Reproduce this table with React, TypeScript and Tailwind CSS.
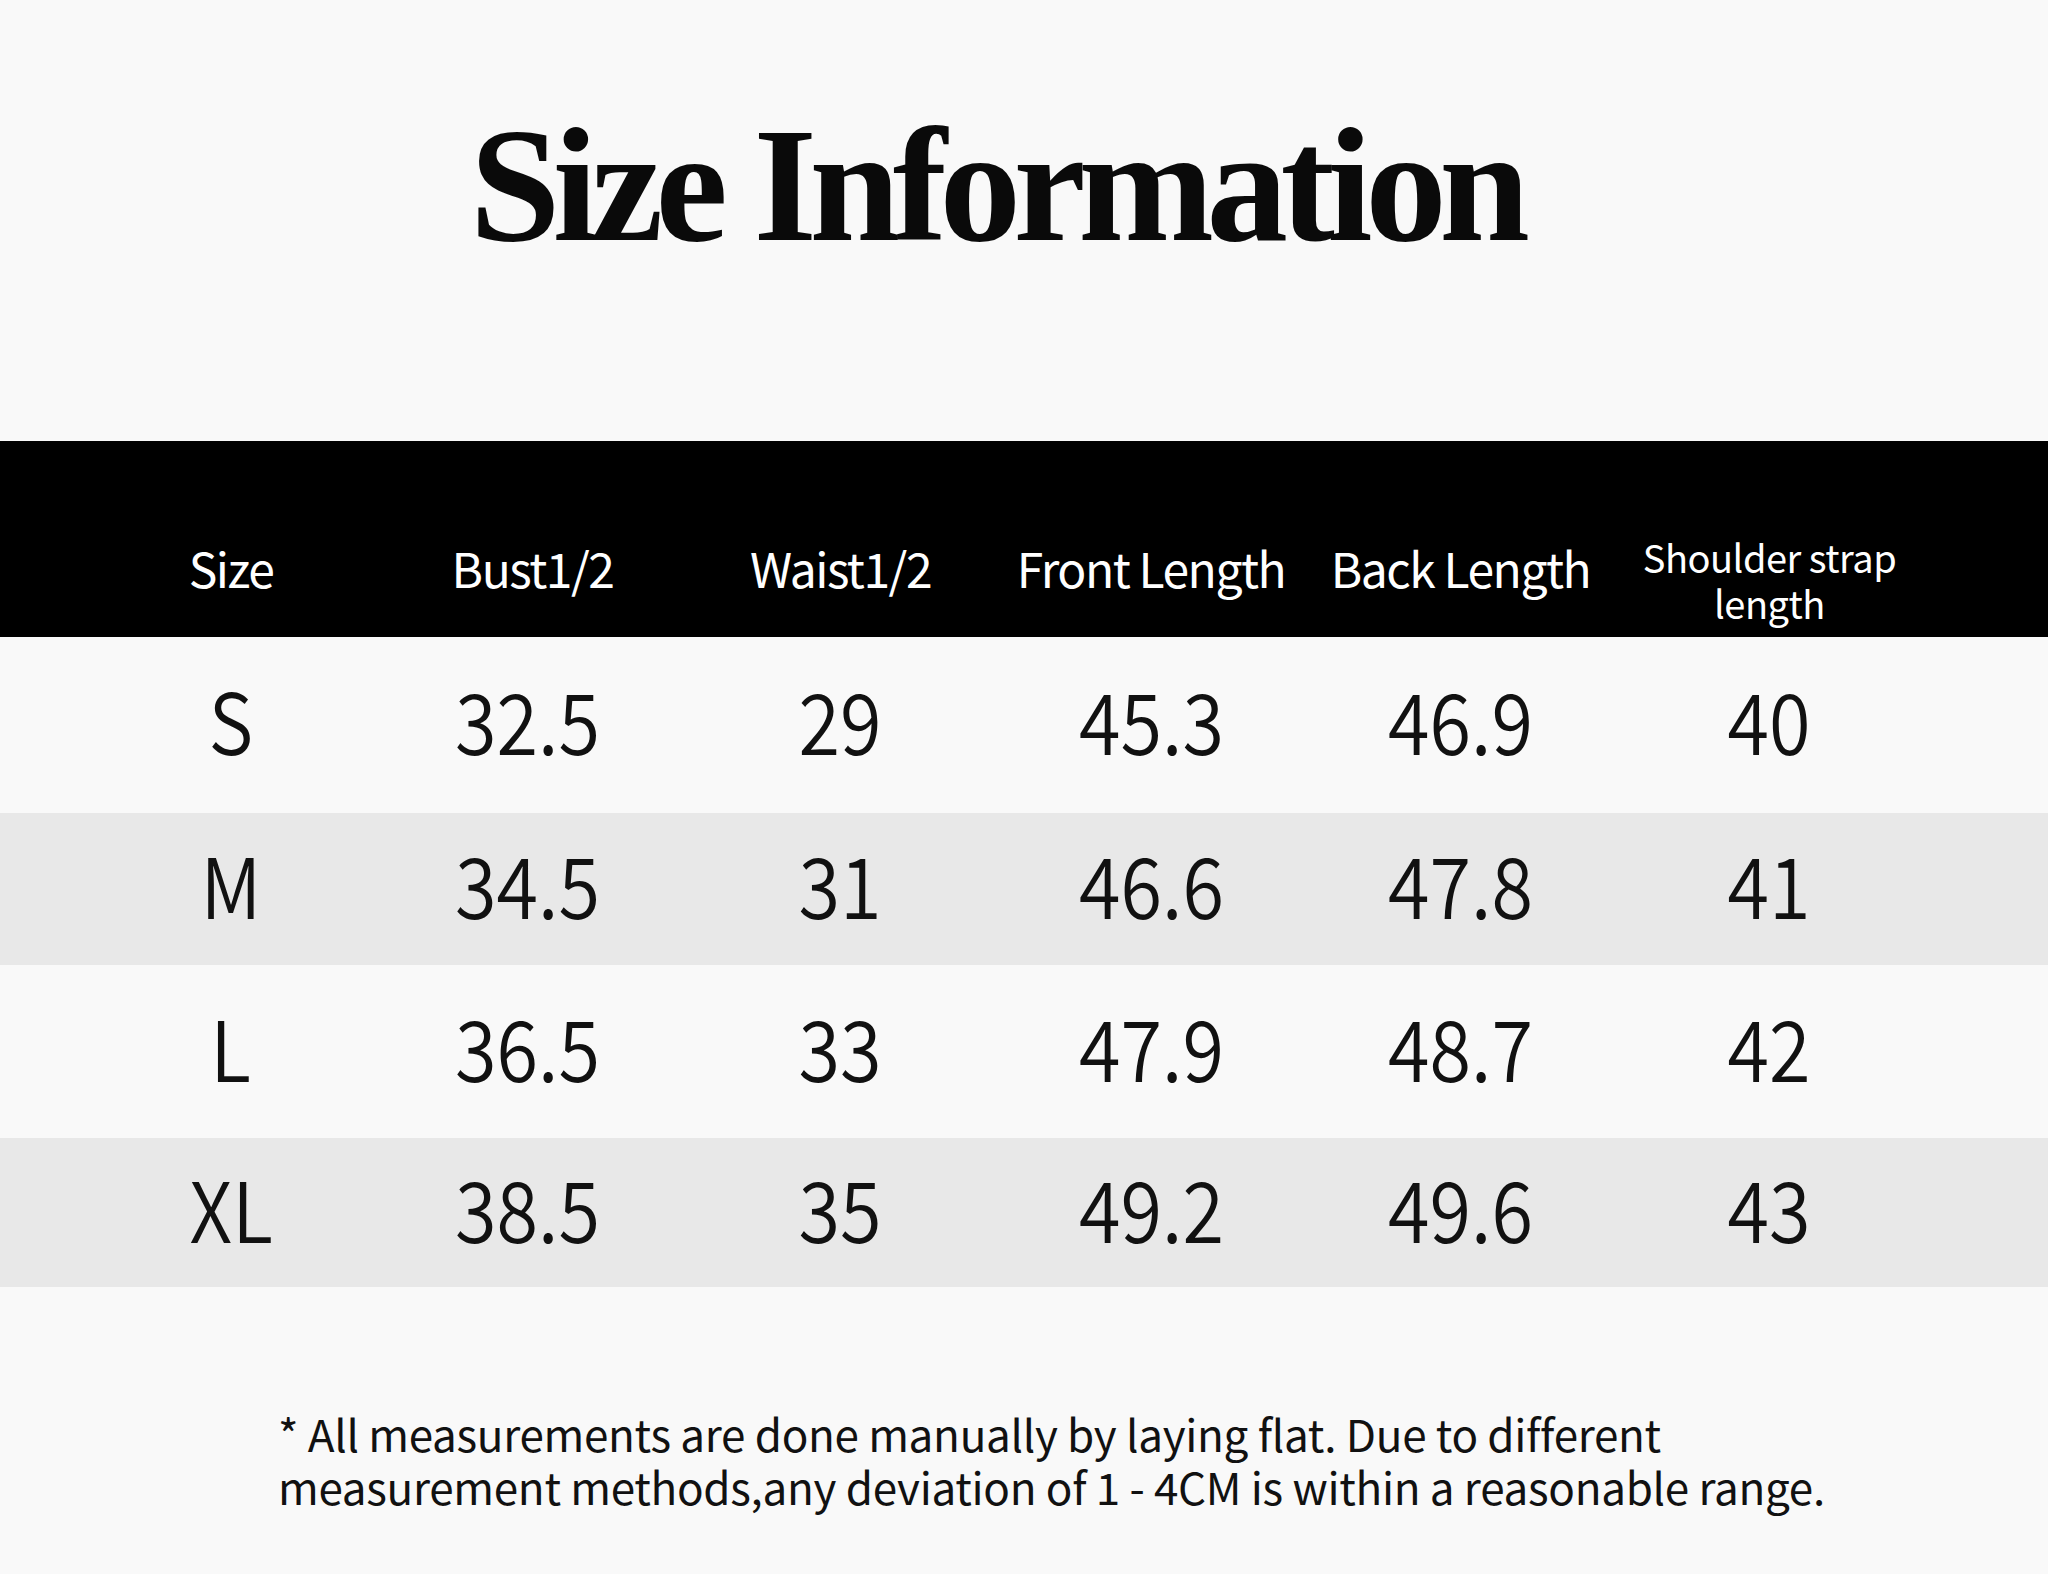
import React from "react";

const sans = { fontFamily: '"Noto Sans CJK SC", "Noto Sans", sans-serif' };

const headers = ["Size", "Bust1/2", "Waist1/2", "Front Length", "Back Length"];
const rows = [
  { cells: ["S", "32.5", "29", "45.3", "46.9", "40"], h: "h-[176px]", bg: "bg-[#f9f9f9]" },
  { cells: ["M", "34.5", "31", "46.6", "47.8", "41"], h: "h-[152px]", bg: "bg-[#e8e8e8]" },
  { cells: ["L", "36.5", "33", "47.9", "48.7", "42"], h: "h-[173px]", bg: "bg-[#f9f9f9]" },
  { cells: ["XL", "38.5", "35", "49.2", "49.6", "43"], h: "h-[149px]", bg: "bg-[#e8e8e8]" },
];

const cols = "grid grid-cols-[298px_305px_311px_310px_309px_309px] pl-[82px]";

export default function App() {
  return (
    <div className="w-[2048px] h-[1574px] bg-[#f9f9f9] flex flex-col overflow-hidden" style={sans}>
      <div className="h-[441px] pt-[104px] pr-[56px] flex justify-center">
        <h1
          className="text-[163px] leading-none font-bold text-[#0a0a0a] tracking-[-7.5px]"
          style={{ fontFamily: '"Liberation Serif", "Times New Roman", serif' }}
        >
          Size Information
        </h1>
      </div>
      <div className={`${cols} h-[196px] bg-black text-white pt-[56px] items-center`}>
        {headers.map((h) => (
          <div key={h} className="text-center text-[48px] leading-[46px] tracking-[-1.5px]">
            {h}
          </div>
        ))}
        <div className="text-center text-[38px] leading-[46px] tracking-[-0.5px] mt-[26px]">
          Shoulder strap
          <br />
          length
        </div>
      </div>
      {rows.map((r, i) => (
        <div key={i} className={`${cols} ${r.h} ${r.bg} pb-[12px] items-center text-[#111]`}>
          {r.cells.map((c, j) => (
            <div key={j} className={`flex justify-center ${j === 1 ? "pr-[10px]" : ""}`}>
              <span className="inline-block text-[84px] leading-none font-[350] scale-x-90">{c}</span>
            </div>
          ))}
        </div>
      ))}
      <div className="pl-[278px] pt-[120px] text-[44px] leading-[53px] tracking-[-0.3px] text-[#111]">
        <p>* All measurements are done manually by laying flat. Due to different</p>
        <p>measurement methods,any deviation of 1 - 4CM is within a reasonable range.</p>
      </div>
    </div>
  );
}
